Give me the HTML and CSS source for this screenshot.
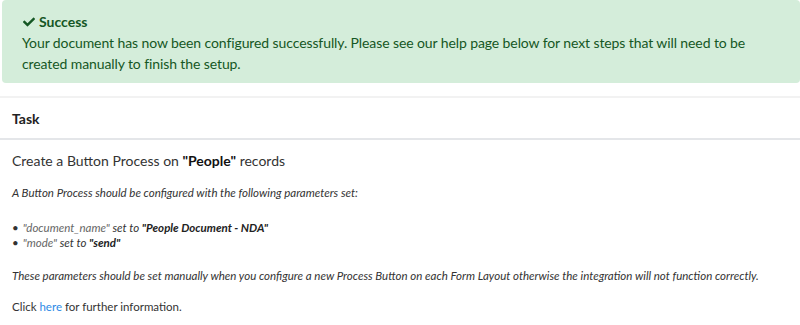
FILE: index.html
```html
<!DOCTYPE html>
<html>
<head>
<meta charset="utf-8">
<link rel="stylesheet" href="styles.css">
</head>
<body>
<div class="alert">
  <div class="alert-title"><svg class="check" viewBox="0 0 512 512"><path d="M173.898 439.404l-166.4-166.4c-9.997-9.997-9.997-26.206 0-36.204l36.203-36.204c9.997-9.998 26.207-9.998 36.204 0L192 312.69 432.095 72.596c9.997-9.997 26.207-9.997 36.204 0l36.203 36.204c9.997 9.997 9.997 26.206 0 36.204l-294.4 294.401c-9.998 9.997-26.207 9.997-36.204-.001z"/></svg>Success</div>
  <div class="alert-text">Your document has now been configured successfully. Please see our help page below for next steps that will need to be created manually to finish the setup.</div>
</div>
<div class="panel">
  <div class="panel-head">Task</div>
  <div class="panel-body">
    <h4 class="task-title">Create a Button Process on <b>"People"</b> records</h4>
    <p class="note">A Button Process should be configured with the following parameters set:</p>
    <ul class="params">
      <li><span class="key">"document_name"</span> set to <b>"People Document - NDA"</b></li>
      <li><span class="key">"mode"</span> set to <b>"send"</b></li>
    </ul>
    <p class="note">These parameters should be set manually when you configure a new Process Button on each Form Layout otherwise the integration will not function correctly.</p>
    <p class="more">Click <a href="#">here</a> for further information.</p>
  </div>
</div>
</body>
</html>
```
FILE: styles.css
```css
html, body {
  margin: 0;
  padding: 0;
  background: #fff;
}
body {
  font-family: Lato, "Open Sans", sans-serif;
  color: #333;
  width: 800px;
  overflow: hidden;
}
.alert {
  margin: 0 0 13px 2px;
  padding: 11px 20px 11px 20px;
  background: #d4edda;
  color: #155724;
  border-radius: 4px;
  font-size: 14px;
  line-height: 21px;
  letter-spacing: -0.1px;
  height: 61px;
}
.alert-title {
  font-weight: 700;
  font-size: 14px;
  letter-spacing: 0;
  display: flex;
  align-items: center;
  gap: 3px;
}
.check {
  width: 14px;
  height: 12px;
  fill: #155724;
}
.panel {
  border-top: 2px solid #f2f2f2;
}
.panel-head {
  font-weight: 700;
  font-size: 14px;
  padding: 0 12px;
  height: 40px;
  display: flex;
  align-items: center;
  border-bottom: 2px solid #e4e6e9;
  color: #222;
}
.panel-body {
  padding: 11px 12px 0 12px;
}
.task-title {
  margin: 0 0 14px 0;
  font-weight: 400;
  font-size: 14px;
  line-height: 20px;
}
.task-title b {
  font-weight: 700;
  color: #111;
}
.note {
  margin: 0;
  font-style: italic;
  font-size: 11.5px;
  line-height: 16px;
}
.params {
  list-style: none;
  margin: 19px 0 18px 0;
  padding: 0;
  font-style: italic;
  font-size: 11.5px;
  line-height: 15px;
}
.params li::before {
  content: "\2022";
  font-style: normal;
  margin-right: 4px;
}
.key {
  color: #666;
}
.params b {
  color: #222;
}
.more {
  margin: 15px 0 0 0;
  font-size: 11.5px;
  line-height: 16px;
}
.more a {
  color: #2d8ae6;
  text-decoration: none;
}
```
